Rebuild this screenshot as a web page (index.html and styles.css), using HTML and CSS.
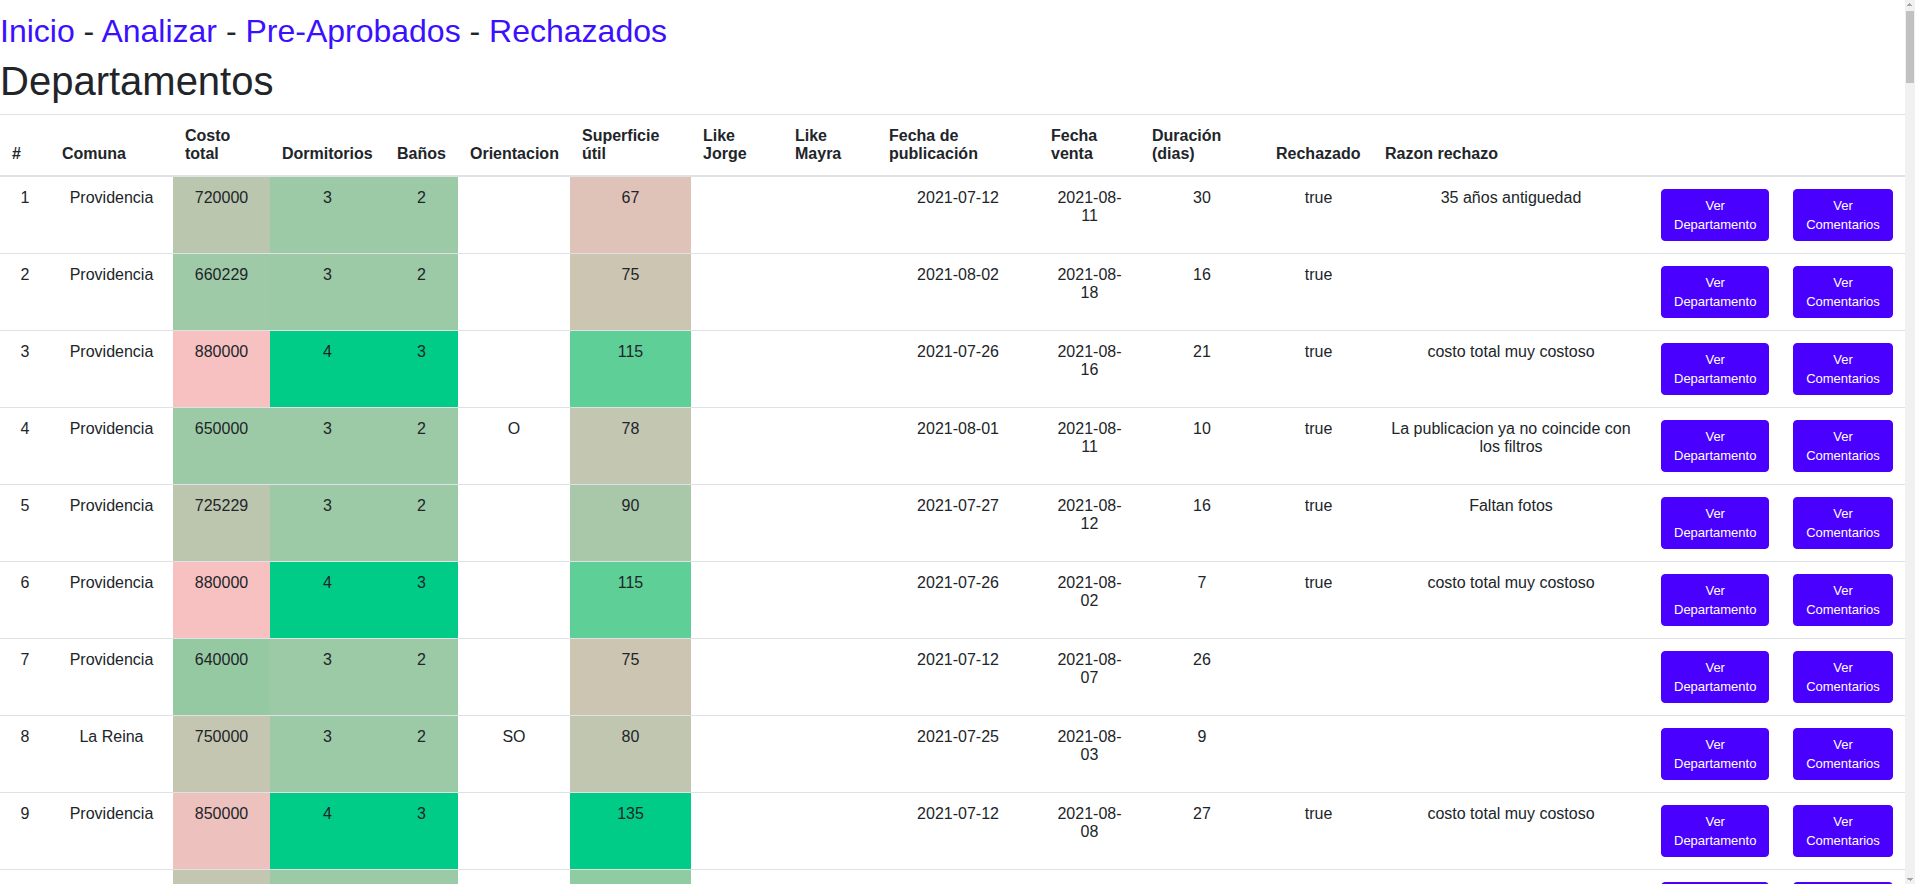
FILE: index.html
```html
<!DOCTYPE html>
<html lang="es">
<head>
<meta charset="utf-8">
<title>Departamentos</title>
<link rel="stylesheet" href="styles.css">
</head>
<body>
<div class="page">
<div class="nav"><a href="#">Inicio</a> - <a href="#">Analizar</a> - <a href="#">Pre-Aprobados</a> - <a href="#">Rechazados</a></div>
<h1 class="title">Departamentos</h1>
<table class="table">
  <colgroup>
    <col class="w-idx"><col class="w-comuna"><col class="w-costo"><col class="w-dorm"><col class="w-banos"><col class="w-orient"><col class="w-sup"><col class="w-like"><col class="w-like2"><col class="w-fpub"><col class="w-fventa"><col class="w-dur"><col class="w-rech"><col><col class="w-btn1"><col class="w-btn2">
  </colgroup>
  <thead>
    <tr><th>#</th><th>Comuna</th><th>Costo total</th><th>Dormitorios</th><th>Baños</th><th>Orientacion</th><th>Superficie útil</th><th>Like Jorge</th><th>Like Mayra</th><th>Fecha de publicación</th><th>Fecha venta</th><th>Duración (dias)</th><th>Rechazado</th><th>Razon rechazo</th><th></th><th></th></tr>
  </thead>
  <tbody id="rows">
    <tr><td>1</td><td>Providencia</td><td style="background:#bac7ae">720000</td><td style="background:#9ccaa6">3</td><td style="background:#9ccaa6">2</td><td></td><td style="background:#e0c3b8">67</td><td></td><td></td><td>2021-07-12</td><td>2021-08-11</td><td>30</td><td>true</td><td>35 años antiguedad</td><td><button class="btn">Ver Departamento</button></td><td><button class="btn">Ver Comentarios</button></td></tr>
    <tr><td>2</td><td>Providencia</td><td style="background:#9fcaa7">660229</td><td style="background:#9ccaa6">3</td><td style="background:#9ccaa6">2</td><td></td><td style="background:#cbc5b2">75</td><td></td><td></td><td>2021-08-02</td><td>2021-08-18</td><td>16</td><td>true</td><td></td><td><button class="btn">Ver Departamento</button></td><td><button class="btn">Ver Comentarios</button></td></tr>
    <tr><td>3</td><td>Providencia</td><td style="background:#f8c1c1">880000</td><td style="background:#00cc88">4</td><td style="background:#00cc88">3</td><td></td><td style="background:#5fcf98">115</td><td></td><td></td><td>2021-07-26</td><td>2021-08-16</td><td>21</td><td>true</td><td>costo total muy costoso</td><td><button class="btn">Ver Departamento</button></td><td><button class="btn">Ver Comentarios</button></td></tr>
    <tr><td>4</td><td>Providencia</td><td style="background:#9dcaa6">650000</td><td style="background:#9ccaa6">3</td><td style="background:#9ccaa6">2</td><td>O</td><td style="background:#c3c6b1">78</td><td></td><td></td><td>2021-08-01</td><td>2021-08-11</td><td>10</td><td>true</td><td>La publicacion ya no coincide con los filtros</td><td><button class="btn">Ver Departamento</button></td><td><button class="btn">Ver Comentarios</button></td></tr>
    <tr><td>5</td><td>Providencia</td><td style="background:#bcc6af">725229</td><td style="background:#9ccaa6">3</td><td style="background:#9ccaa6">2</td><td></td><td style="background:#a9c8aa">90</td><td></td><td></td><td>2021-07-27</td><td>2021-08-12</td><td>16</td><td>true</td><td>Faltan fotos</td><td><button class="btn">Ver Departamento</button></td><td><button class="btn">Ver Comentarios</button></td></tr>
    <tr><td>6</td><td>Providencia</td><td style="background:#f8c1c1">880000</td><td style="background:#00cc88">4</td><td style="background:#00cc88">3</td><td></td><td style="background:#5fcf98">115</td><td></td><td></td><td>2021-07-26</td><td>2021-08-02</td><td>7</td><td>true</td><td>costo total muy costoso</td><td><button class="btn">Ver Departamento</button></td><td><button class="btn">Ver Comentarios</button></td></tr>
    <tr><td>7</td><td>Providencia</td><td style="background:#95c9a2">640000</td><td style="background:#9ccaa6">3</td><td style="background:#9ccaa6">2</td><td></td><td style="background:#cbc5b2">75</td><td></td><td></td><td>2021-07-12</td><td>2021-08-07</td><td>26</td><td></td><td></td><td><button class="btn">Ver Departamento</button></td><td><button class="btn">Ver Comentarios</button></td></tr>
    <tr><td>8</td><td>La Reina</td><td style="background:#c5c6b2">750000</td><td style="background:#9ccaa6">3</td><td style="background:#9ccaa6">2</td><td>SO</td><td style="background:#c0c6b0">80</td><td></td><td></td><td>2021-07-25</td><td>2021-08-03</td><td>9</td><td></td><td></td><td><button class="btn">Ver Departamento</button></td><td><button class="btn">Ver Comentarios</button></td></tr>
    <tr><td>9</td><td>Providencia</td><td style="background:#edc1be">850000</td><td style="background:#00cc88">4</td><td style="background:#00cc88">3</td><td></td><td style="background:#00cc88">135</td><td></td><td></td><td>2021-07-12</td><td>2021-08-08</td><td>27</td><td>true</td><td>costo total muy costoso</td><td><button class="btn">Ver Departamento</button></td><td><button class="btn">Ver Comentarios</button></td></tr>
    <tr><td>10</td><td>Providencia</td><td style="background:#c3c6b0">745000</td><td style="background:#9ccaa6">3</td><td style="background:#9ccaa6">2</td><td></td><td style="background:#8fcca2">95</td><td></td><td></td><td>2021-07-20</td><td>2021-08-05</td><td>16</td><td></td><td></td><td><button class="btn">Ver Departamento</button></td><td><button class="btn">Ver Comentarios</button></td></tr>
  </tbody>
</table>
</div>
<script src="app.js"></script>
</body>
</html>
```

FILE: styles.css
```css
html, body {
  margin: 0;
  padding: 0;
  height: 100%;
  overflow: hidden;
}
body {
  font-family: "Liberation Sans", Arial, sans-serif;
  font-size: 16px;
  color: #212529;
  background-color: #fff;
  /* scrollbar track, thumb and arrows drawn as background layers */
  background-image:
    linear-gradient(to bottom right, transparent 50%, #a3a3a3 50%),
    linear-gradient(to bottom left, transparent 50%, #a3a3a3 50%),
    linear-gradient(to top right, transparent 50%, #a3a3a3 50%),
    linear-gradient(to top left, transparent 50%, #a3a3a3 50%),
    linear-gradient(#c1c1c1, #c1c1c1),
    linear-gradient(#f1f1f1, #f1f1f1);
  background-size: 3px 3px, 3px 3px, 3px 3px, 3px 3px, 8px 72px, 10px 100%;
  background-position:
    right 5px top 3px,
    right 2px top 3px,
    right 5px bottom 3px,
    right 2px bottom 3px,
    right 1px top 11px,
    right top;
  background-repeat: no-repeat;
}
.page {
  height: 100vh;
  margin-right: 10px;
  overflow-y: auto;
  background: #fff;
}
a {
  color: #3b10ff;
  text-decoration: none;
}
.nav {
  font-size: 32px;
  line-height: 38px;
  padding-top: 12px;
}
.title {
  font-size: 40px;
  font-weight: 400;
  line-height: 48px;
  margin: 7px 0 9px;
}
.table {
  width: 100%;
  border-collapse: collapse;
  table-layout: fixed;
}
.table th,
.table td {
  padding: 12px;
  border-top: 1px solid #dee2e6;
  line-height: normal;
}
.table thead th {
  vertical-align: bottom;
  border-bottom: 2px solid #dee2e6;
  text-align: left;
  font-weight: 700;
}
.table td {
  vertical-align: top;
  text-align: center;
}
.w-idx { width: 50px; }
.w-comuna { width: 123px; }
.w-costo { width: 97px; }
.w-dorm { width: 115px; }
.w-banos { width: 73px; }
.w-orient { width: 112px; }
.w-sup { width: 121px; }
.w-like { width: 92px; }
.w-like2 { width: 94px; }
.w-fpub { width: 162px; }
.w-fventa { width: 101px; }
.w-dur { width: 124px; }
.w-rech { width: 109px; }
.w-btn1 { width: 132px; }
.w-btn2 { width: 124px; }
.btn {
  display: inline-block;
  vertical-align: top;
  font-family: "Liberation Sans", Arial, sans-serif;
  font-size: 13px;
  line-height: 19px;
  padding: 6px 12px;
  color: #fff;
  background: #4a00ff;
  border: 1px solid #4a00ff;
  border-radius: 4px;
  cursor: pointer;
}
```

FILE: app.js
```js
(function () {
  var body = document.getElementById('rows');
  var base = Array.prototype.slice.call(body.rows, 0, 9);
  for (var i = 10; i < 135; i++) {
    var r = base[i % 9].cloneNode(true);
    r.cells[0].textContent = String(i + 1);
    body.appendChild(r);
  }
})();
```
